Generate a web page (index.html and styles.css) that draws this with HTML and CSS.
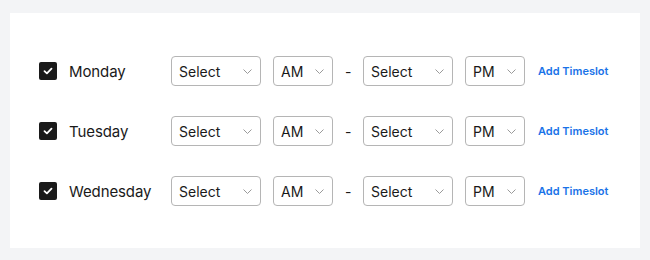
FILE: index.html
```html
<!DOCTYPE html>
<html lang="en">
<head>
    <meta charset="UTF-8">
    <meta name="viewport" content="width=device-width, initial-scale=1.0">
    <title>Availability</title>
    <link rel="stylesheet" href="styles.css">
</head>
<body>
    <div class="card">
        <!-- Monday -->
        <div class="day-row">
            <span class="check">
                <svg width="10" height="8" viewBox="0 0 10 8"><path d="M1.5 4.2 L3.9 6.4 L8.5 1.6" fill="none" stroke="#fff" stroke-width="1.8" stroke-linecap="round" stroke-linejoin="round"/></svg>
            </span>
            <span class="day">Monday</span>
            <div class="select-wrap wide">
                <select><option>Select</option></select>
                <svg class="chev" width="9" height="5" viewBox="0 0 9 5"><path d="M0.5 0.5 L4.5 4.5 L8.5 0.5" fill="none" stroke="#9a9a9a" stroke-width="1"/></svg>
            </div>
            <div class="select-wrap narrow">
                <select><option>AM</option><option>PM</option></select>
                <svg class="chev" width="9" height="5" viewBox="0 0 9 5"><path d="M0.5 0.5 L4.5 4.5 L8.5 0.5" fill="none" stroke="#9a9a9a" stroke-width="1"/></svg>
            </div>
            <span class="dash">-</span>
            <div class="select-wrap wide">
                <select><option>Select</option></select>
                <svg class="chev" width="9" height="5" viewBox="0 0 9 5"><path d="M0.5 0.5 L4.5 4.5 L8.5 0.5" fill="none" stroke="#9a9a9a" stroke-width="1"/></svg>
            </div>
            <div class="select-wrap narrow">
                <select><option>PM</option><option>AM</option></select>
                <svg class="chev" width="9" height="5" viewBox="0 0 9 5"><path d="M0.5 0.5 L4.5 4.5 L8.5 0.5" fill="none" stroke="#9a9a9a" stroke-width="1"/></svg>
            </div>
            <a href="#" class="add-link">Add Timeslot</a>
        </div>

        <!-- Tuesday -->
        <div class="day-row">
            <span class="check">
                <svg width="10" height="8" viewBox="0 0 10 8"><path d="M1.5 4.2 L3.9 6.4 L8.5 1.6" fill="none" stroke="#fff" stroke-width="1.8" stroke-linecap="round" stroke-linejoin="round"/></svg>
            </span>
            <span class="day">Tuesday</span>
            <div class="select-wrap wide">
                <select><option>Select</option></select>
                <svg class="chev" width="9" height="5" viewBox="0 0 9 5"><path d="M0.5 0.5 L4.5 4.5 L8.5 0.5" fill="none" stroke="#9a9a9a" stroke-width="1"/></svg>
            </div>
            <div class="select-wrap narrow">
                <select><option>AM</option><option>PM</option></select>
                <svg class="chev" width="9" height="5" viewBox="0 0 9 5"><path d="M0.5 0.5 L4.5 4.5 L8.5 0.5" fill="none" stroke="#9a9a9a" stroke-width="1"/></svg>
            </div>
            <span class="dash">-</span>
            <div class="select-wrap wide">
                <select><option>Select</option></select>
                <svg class="chev" width="9" height="5" viewBox="0 0 9 5"><path d="M0.5 0.5 L4.5 4.5 L8.5 0.5" fill="none" stroke="#9a9a9a" stroke-width="1"/></svg>
            </div>
            <div class="select-wrap narrow">
                <select><option>PM</option><option>AM</option></select>
                <svg class="chev" width="9" height="5" viewBox="0 0 9 5"><path d="M0.5 0.5 L4.5 4.5 L8.5 0.5" fill="none" stroke="#9a9a9a" stroke-width="1"/></svg>
            </div>
            <a href="#" class="add-link">Add Timeslot</a>
        </div>

        <!-- Wednesday -->
        <div class="day-row">
            <span class="check">
                <svg width="10" height="8" viewBox="0 0 10 8"><path d="M1.5 4.2 L3.9 6.4 L8.5 1.6" fill="none" stroke="#fff" stroke-width="1.8" stroke-linecap="round" stroke-linejoin="round"/></svg>
            </span>
            <span class="day">Wednesday</span>
            <div class="select-wrap wide">
                <select><option>Select</option></select>
                <svg class="chev" width="9" height="5" viewBox="0 0 9 5"><path d="M0.5 0.5 L4.5 4.5 L8.5 0.5" fill="none" stroke="#9a9a9a" stroke-width="1"/></svg>
            </div>
            <div class="select-wrap narrow">
                <select><option>AM</option><option>PM</option></select>
                <svg class="chev" width="9" height="5" viewBox="0 0 9 5"><path d="M0.5 0.5 L4.5 4.5 L8.5 0.5" fill="none" stroke="#9a9a9a" stroke-width="1"/></svg>
            </div>
            <span class="dash">-</span>
            <div class="select-wrap wide">
                <select><option>Select</option></select>
                <svg class="chev" width="9" height="5" viewBox="0 0 9 5"><path d="M0.5 0.5 L4.5 4.5 L8.5 0.5" fill="none" stroke="#9a9a9a" stroke-width="1"/></svg>
            </div>
            <div class="select-wrap narrow">
                <select><option>PM</option><option>AM</option></select>
                <svg class="chev" width="9" height="5" viewBox="0 0 9 5"><path d="M0.5 0.5 L4.5 4.5 L8.5 0.5" fill="none" stroke="#9a9a9a" stroke-width="1"/></svg>
            </div>
            <a href="#" class="add-link">Add Timeslot</a>
        </div>
    </div>
</body>
</html>
```

FILE: styles.css
```css
body {
    margin: 0;
    padding: 13px 10px;
    background: #f3f4f6;
    font-family: Inter, "Liberation Sans", sans-serif;
    color: #1a1a1a;
}
.card {
    background: #fff;
    padding: 43px 29px 42px;
    display: flex;
    flex-direction: column;
    gap: 30px;
}
.day-row {
    display: flex;
    align-items: center;
    gap: 12px;
    height: 30px;
}
.check {
    width: 18px;
    height: 18px;
    border-radius: 2px;
    background: #1a1a1a;
    display: flex;
    align-items: center;
    justify-content: center;
    flex-shrink: 0;
}
.day {
    width: 90px;
    font-size: 15px;
    letter-spacing: -0.1px;
}
.select-wrap {
    position: relative;
    height: 30px;
}
.select-wrap.wide {
    width: 90px;
}
.select-wrap.narrow {
    width: 60px;
}
.select-wrap select {
    appearance: none;
    -webkit-appearance: none;
    width: 100%;
    height: 100%;
    box-sizing: border-box;
    border: 1px solid #b5b5b5;
    border-radius: 4px;
    background: #fff;
    padding: 0 0 0 7px;
    font-family: inherit;
    font-size: 14px;
    color: #1a1a1a;
}
.chev {
    position: absolute;
    right: 9px;
    top: 13px;
    pointer-events: none;
}
.dash {
    width: 6px;
    font-size: 14px;
    text-align: center;
}
.add-link {
    margin-left: 1px;
    font-size: 11px;
    font-weight: 600;
    color: #1a73e8;
    text-decoration: none;
}
```
